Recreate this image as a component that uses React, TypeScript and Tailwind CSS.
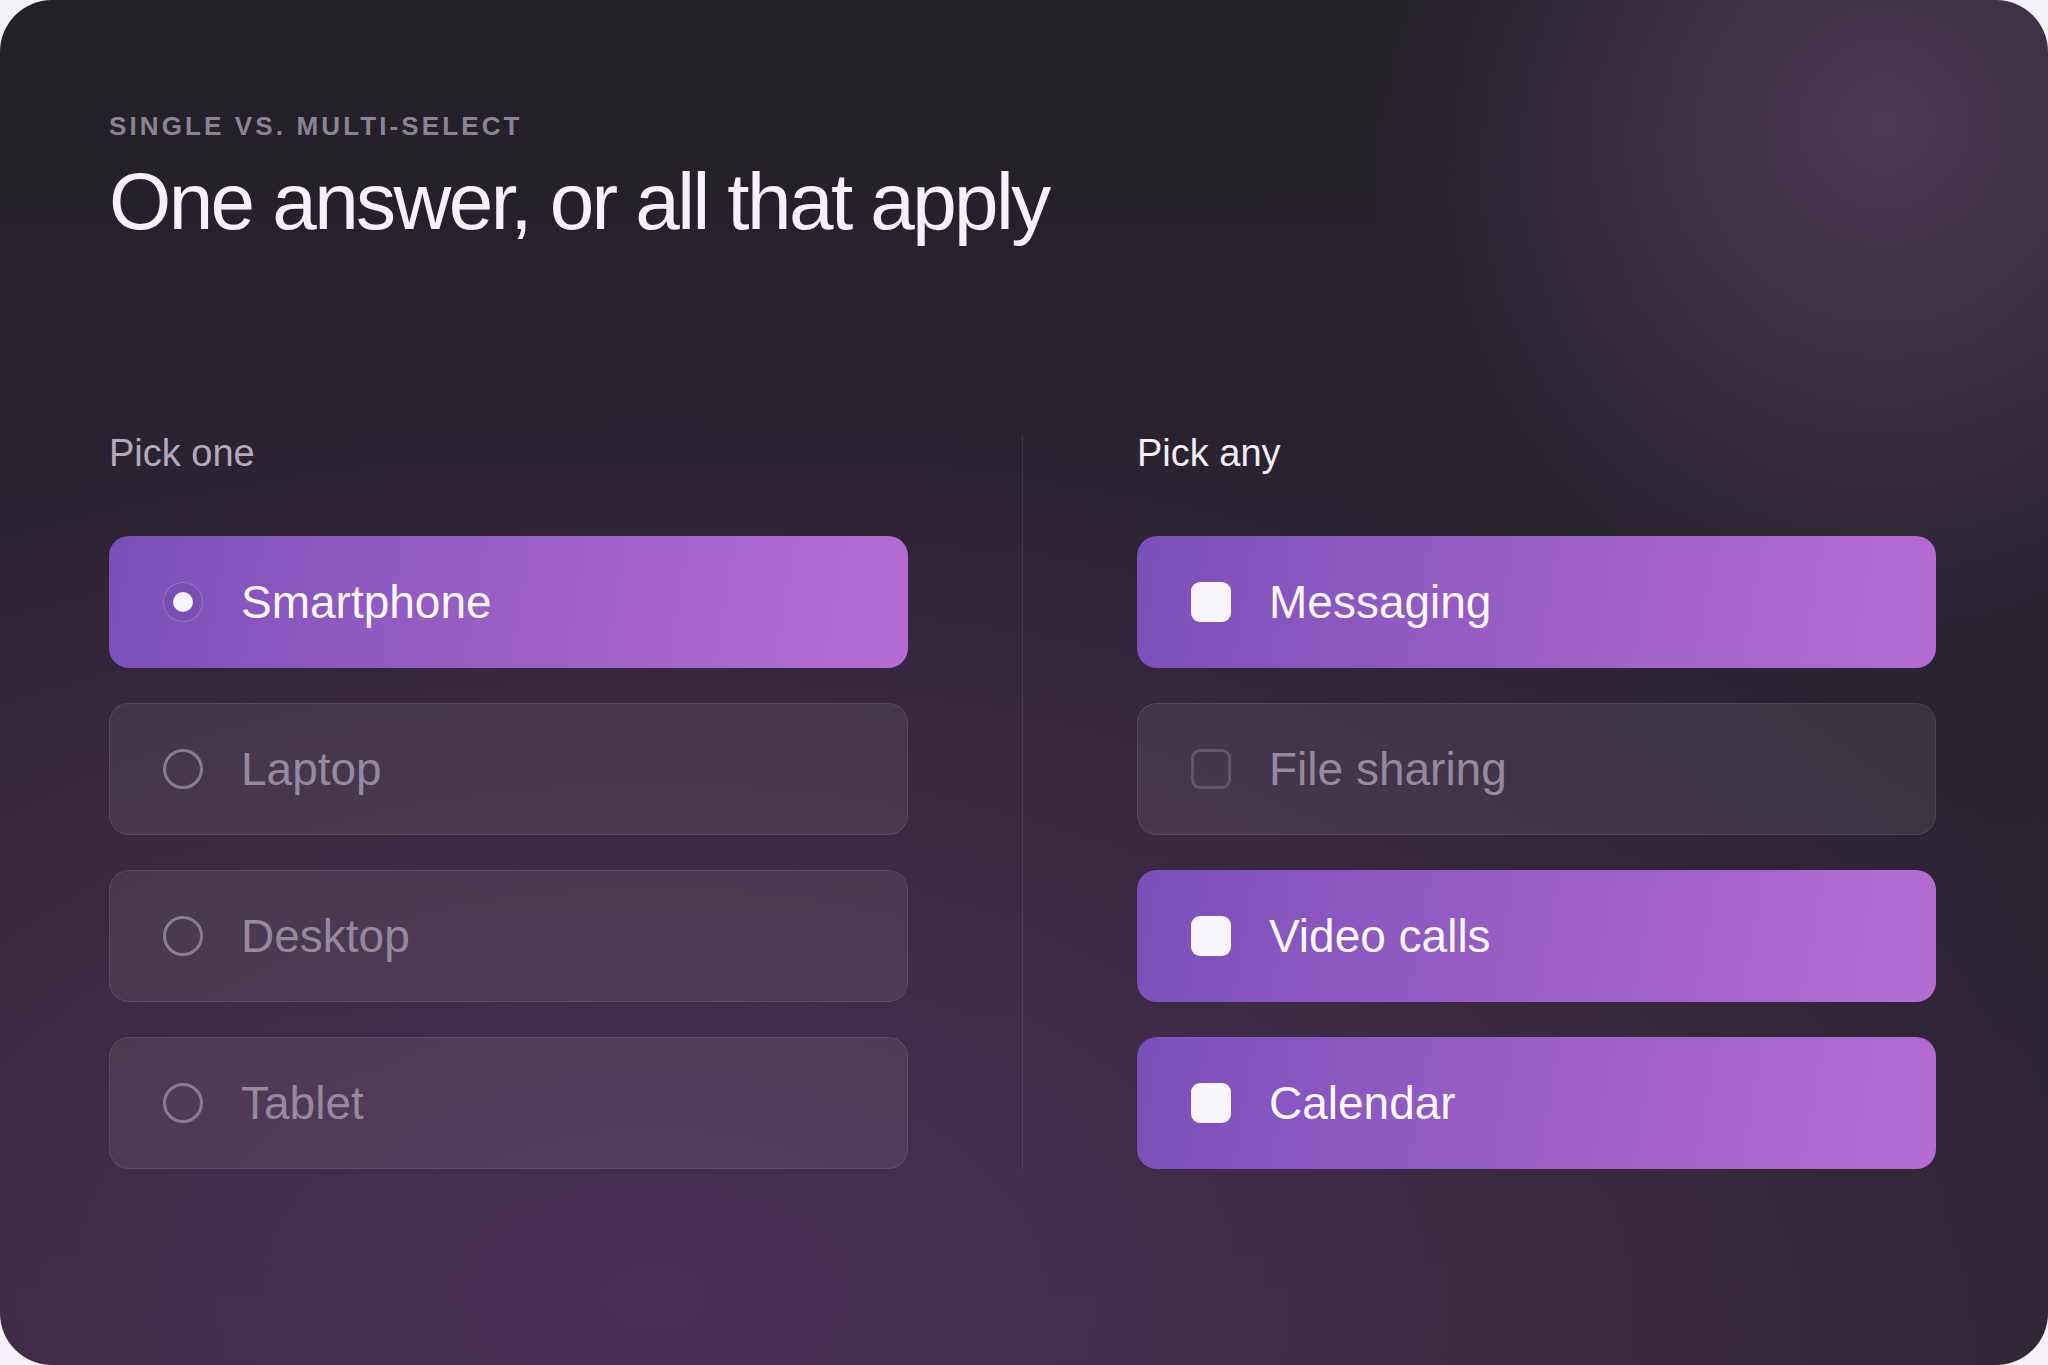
type Option = { label: string; on: boolean };

const single: Option[] = [
  { label: "Smartphone", on: true },
  { label: "Laptop", on: false },
  { label: "Desktop", on: false },
  { label: "Tablet", on: false },
];

const multi: Option[] = [
  { label: "Messaging", on: true },
  { label: "File sharing", on: false },
  { label: "Video calls", on: true },
  { label: "Calendar", on: true },
];

const Radio = ({ on }: { on: boolean }) =>
  on ? (
    <span className="flex h-10 w-10 shrink-0 items-center justify-center rounded-full border border-white/20 bg-black/5">
      <span className="h-5 w-5 rounded-full bg-[#f9f5fd]" />
    </span>
  ) : (
    <span className="h-10 w-10 shrink-0 rounded-full border-[3px] border-[#877d92]" />
  );

const Check = ({ on }: { on: boolean }) =>
  on ? (
    <span className="h-10 w-10 shrink-0 rounded-[9px] bg-[#f9f5fd]" />
  ) : (
    <span className="h-10 w-10 shrink-0 rounded-[9px] border-[3px] border-[#5f5669]" />
  );

const Row = ({ option, kind }: { option: Option; kind: "radio" | "check" }) => (
  <div
    className={
      option.on
        ? "flex h-[132px] items-center gap-[38px] rounded-[20px] bg-[linear-gradient(100deg,#7b4fb9_0%,#9a5fc6_50%,#b56bd4_100%)] pl-[54px] text-[#faf6fd]"
        : "flex h-[132px] items-center gap-[38px] rounded-[20px] border border-white/[0.09] bg-white/[0.07] pl-[53px] text-[#948a9f]"
    }
  >
    {kind === "radio" ? <Radio on={option.on} /> : <Check on={option.on} />}
    <span className="text-[46px] leading-none">{option.label}</span>
  </div>
);

export default function App() {
  return (
    <div className="h-[1365px] w-[2048px] bg-[#f6f2fa] font-['Liberation_Sans',Arial,sans-serif]">
      <div className="h-full rounded-[52px] bg-[radial-gradient(circle_520px_at_92%_9%,rgba(76,57,88,1)_0%,rgba(76,57,88,0)_100%),radial-gradient(ellipse_75%_70%_at_32%_95%,rgba(76,46,88,1)_0%,rgba(76,46,88,0)_100%),linear-gradient(180deg,#232026_0%,#2a2330_45%,#2e2633_100%)] pl-[109px] pr-[112px] pt-[113px]">
        <p className="text-[26px] font-semibold uppercase leading-none tracking-[0.12em] text-[#8c8395]">
          Single vs. multi-select
        </p>
        <h1 className="mt-[23px] text-[80px] leading-none tracking-[-0.032em] text-[#f6f1fa]">
          One answer, or all that apply
        </h1>

        <div className="mt-[192px] grid grid-cols-[1fr_1px_1fr] gap-x-[114px]">
          <section>
            <h2 className="text-[38px] leading-none text-[#b3abbd]">Pick one</h2>
            <div className="mt-[64px] flex flex-col gap-[35px]">
              {single.map((o) => (
                <Row key={o.label} option={o} kind="radio" />
              ))}
            </div>
          </section>

          <div className="bg-white/[0.09]" />

          <section>
            <h2 className="text-[38px] leading-none text-[#f3eef7]">Pick any</h2>
            <div className="mt-[64px] flex flex-col gap-[35px]">
              {multi.map((o) => (
                <Row key={o.label} option={o} kind="check" />
              ))}
            </div>
          </section>
        </div>
      </div>
    </div>
  );
}
